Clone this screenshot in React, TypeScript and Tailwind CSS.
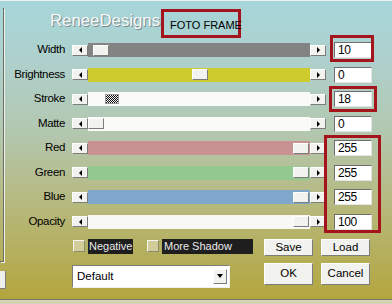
import React from 'react';

const font = { fontFamily: '"Liberation Sans", Arial, sans-serif' };

type Row = {
  label: string;
  track: string;
  thumb: string;
  value: string;
  checker?: boolean;
};

const rows: Row[] = [
  { label: 'Width', track: 'bg-[#838383]', thumb: 'left-[5px]', value: '10' },
  { label: 'Brightness', track: 'bg-[#cccc2e]', thumb: 'left-[104px]', value: '0' },
  { label: 'Stroke', track: 'bg-[#fafaf8]', thumb: 'left-[17px]', value: '18', checker: true },
  { label: 'Matte', track: 'bg-[#fafaf8]', thumb: 'left-0', value: '0' },
  { label: 'Red', track: 'bg-[#c89292]', thumb: 'left-[205px]', value: '255' },
  { label: 'Green', track: 'bg-[#93c891]', thumb: 'left-[205px]', value: '255' },
  { label: 'Blue', track: 'bg-[#7fa6cb]', thumb: 'left-[205px]', value: '255' },
  { label: 'Opacity', track: 'bg-[#f8f8f4]', thumb: 'left-[205px]', value: '100' },
];

const raised = 'bg-[#f2f2ee] border border-t-white border-l-white border-r-[#7c7c7c] border-b-[#7c7c7c]';

function ArrowBtn({ dir }: { dir: 'left' | 'right' }) {
  return (
    <div className={`h-[11px] w-[16px] shrink-0 flex items-center justify-center ${raised}`}>
      {dir === 'left' ? (
        <div className="w-0 h-0 border-y-[3px] border-y-transparent border-r-[3px] border-r-black" />
      ) : (
        <div className="w-0 h-0 border-y-[3px] border-y-transparent border-l-[3px] border-l-black" />
      )}
    </div>
  );
}

function SliderRow({ row }: { row: Row }) {
  return (
    <div className="h-[24.5px] flex items-center">
      <div className="w-[59px] text-right text-[11.5px] tracking-[-0.35px] text-black leading-none">{row.label}</div>
      <div className="ml-[7px] flex items-center">
        <ArrowBtn dir="left" />
        <div className={`relative h-[14px] w-[222px] ${row.track}`}>
          {row.checker ? (
            <div
              className={`absolute top-[2px] h-[10px] w-[14px] ${row.thumb} border border-[#9a9a9a] bg-[repeating-conic-gradient(#111_0_25%,#f4f4f4_0_50%)] bg-[length:2px_2px]`}
            />
          ) : (
            <div className={`absolute top-[1.5px] h-[11px] w-[16px] ${row.thumb} ${raised}`} />
          )}
        </div>
        <ArrowBtn dir="right" />
      </div>
      <div className="ml-[8px] h-[16px] w-[38px] bg-white border border-t-[#6e6e6e] border-l-[#6e6e6e] border-r-[#e4e4e4] border-b-[#e4e4e4] flex items-center pl-[3px] text-[12px] tracking-[-0.4px] leading-none text-black">
        {row.value}
      </div>
    </div>
  );
}

export default function App() {
  return (
    <div className="w-[392px] h-[304px] bg-[#d6d2b6] overflow-hidden" style={font}>
      <div className="relative h-[300px] border-t border-[#e8f2f2] border-b border-b-[#77776a] flex bg-[linear-gradient(to_bottom,#a6d6da_0%,#aed0cc_20%,#b3c7ae_45%,#b6b97e_68%,#b4a63e_100%)]">
        {/* left edge panels */}
        <div className="w-[6px] flex flex-col">
          <div className="mt-[7px] h-[254px] w-[4px] border-r border-b border-[#6c6c60] shadow-[1px_1px_0_#eef2ee]" />
          <div className="mt-[9px] h-[18px] w-[6px] bg-[#efefeb] border-r border-b border-[#7c7c7c]" />
        </div>

        <div className="flex-1 flex flex-col">
          {/* header */}
          <div className="h-[36.75px] flex items-start pt-[8px] pl-[44px]">
            <div className="w-[111px] shrink-0 text-[16.8px] leading-none mt-[4px] text-[#f6fafa] [text-shadow:1px_1px_0_#7a8a8a,-0.5px_-0.5px_0_#b8c8c8] whitespace-nowrap">
              ReneeDesigns
            </div>
            <div className="h-[29px] w-[80px] shrink-0 border-[3px] border-[#a3141c] flex items-end pb-[4px] pl-[6px] text-[11px] leading-none text-black whitespace-nowrap">
              FOTO FRAME
            </div>
          </div>

          {rows.map((r) => (
            <SliderRow key={r.label} row={r} />
          ))}

          {/* bottom controls */}
          <div className="flex pl-[66px]">
            <div className="w-[158px] shrink-0 flex flex-col">
              <div className="mt-[5px] h-[15px] flex items-center whitespace-nowrap">
                <div className="ml-[1px] h-[12px] w-[12px] shrink-0 border border-t-[#f4f4f0] border-l-[#f4f4f0] border-r-[#8a8a70] border-b-[#8a8a70] bg-[#d2cc9a]" />
                <div className="ml-[3px] h-[15px] w-[45px] shrink-0 bg-[#1e1e1e] text-[#eaeaea] text-[11px] leading-[15px] pl-[1px]">Negative</div>
                <div className="ml-[14px] h-[12px] w-[12px] shrink-0 border border-t-[#f4f4f0] border-l-[#f4f4f0] border-r-[#8a8a70] border-b-[#8a8a70] bg-[#d2cc9a]" />
                <div className="ml-[3px] h-[15px] w-[91px] shrink-0 bg-[#1e1e1e] text-[#eaeaea] text-[11px] leading-[15px] pl-[2px]">More Shadow</div>
              </div>
              <div className="mt-[11px] h-[23px] w-[158px] bg-white border border-t-[#7c7c7c] border-l-[#7c7c7c] border-r-[#f0f0f0] border-b-[#f0f0f0] flex items-center justify-between pl-[4px] pr-[2px]">
                <span className="text-[11.5px] leading-none text-black">Default</span>
                <div className={`h-[15px] w-[14px] flex items-center justify-center ${raised}`}>
                  <div className="w-0 h-0 border-x-[3.5px] border-x-transparent border-t-[4px] border-t-black" />
                </div>
              </div>
            </div>

            <div className="ml-[34px] flex flex-col">
              <div className="mt-[5px] flex gap-[8px]">
                <div className={`h-[17px] w-[49px] flex items-center justify-center text-[11.5px] leading-none text-black ${raised}`}>Save</div>
                <div className={`h-[17px] w-[49px] flex items-center justify-center text-[11.5px] leading-none text-black ${raised}`}>Load</div>
              </div>
              <div className="mt-[7px] flex gap-[8px]">
                <div className={`h-[22px] w-[49px] flex items-center justify-center text-[11.5px] leading-none text-black ${raised}`}>OK</div>
                <div className={`h-[22px] w-[49px] flex items-center justify-center text-[11.5px] leading-none text-black ${raised}`}>Cancel</div>
              </div>
            </div>
          </div>
        </div>

        {/* red annotation boxes */}
        <div className="absolute left-[330px] top-[34px] h-[27px] w-[44px] border-[3px] border-[#a3141c]" />
        <div className="absolute left-[329px] top-[85px] h-[26px] w-[48px] border-[3px] border-[#a3141c]" />
        <div className="absolute left-[324px] top-[134px] h-[98px] w-[57px] border-[3px] border-[#a3141c]" />
      </div>
    </div>
  );
}
